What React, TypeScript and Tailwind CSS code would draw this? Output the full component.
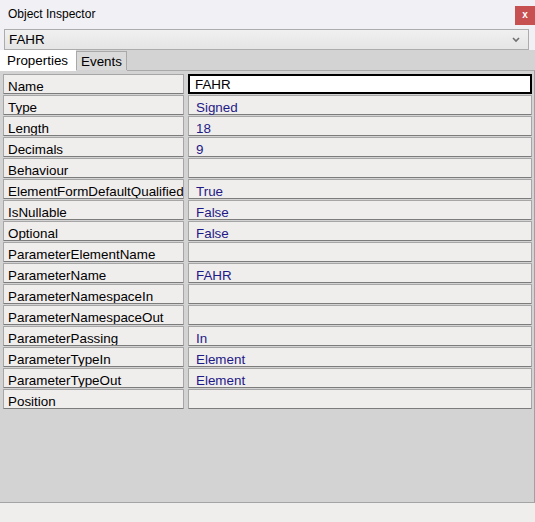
const rows: [string, string][] = [
  ['Name', 'FAHR'],
  ['Type', 'Signed'],
  ['Length', '18'],
  ['Decimals', '9'],
  ['Behaviour', ''],
  ['ElementFormDefaultQualified', 'True'],
  ['IsNullable', 'False'],
  ['Optional', 'False'],
  ['ParameterElementName', ''],
  ['ParameterName', 'FAHR'],
  ['ParameterNamespaceIn', ''],
  ['ParameterNamespaceOut', ''],
  ['ParameterPassing', 'In'],
  ['ParameterTypeIn', 'Element'],
  ['ParameterTypeOut', 'Element'],
  ['Position', ''],
];

export default function App() {
  return (
    <div
      className="w-[535px] h-[522px] flex flex-col bg-[#f1f0f5] overflow-hidden text-black"
      style={{ fontFamily: '"Liberation Sans", Arial, sans-serif' }}
    >
      {/* Title bar */}
      <div className="h-[29px] flex items-start justify-between shrink-0">
        <span className="text-[12px] pl-2 pt-[7px] leading-[14px]">Object Inspector</span>
        <div className="mt-[6px] w-[20px] h-[19px] bg-[#c75050] flex items-center justify-center text-white text-[10px] font-bold leading-none pb-[2px]">
          x
        </div>
      </div>

      {/* Object selector */}
      <div className="h-[21px] shrink-0 pl-1 pr-[6px]">
        <div className="h-[21px] border border-[#acacac] bg-gradient-to-b from-[#f0f0f0] to-[#e5e5e5] flex items-center justify-between pl-1 pr-2">
          <span className="text-[13.4px] leading-none">FAHR</span>
          <svg width="8" height="6" viewBox="0 0 8 6" className="mt-[1px]">
            <path d="M1 1 L4 4 L7 1" fill="none" stroke="#707070" strokeWidth="1.6" />
          </svg>
        </div>
      </div>

      {/* Tabs */}
      <div className="h-[21px] shrink-0 bg-[#d3d3d3] flex items-end">
        <div className="h-[21px] w-[76px] bg-white text-[13.4px] leading-none pl-[7px] pt-[4px]">Properties</div>
        <div className="h-[19px] w-[51px] mb-[1px] bg-[#dadada] border border-[#a9a9a9] border-b-0 text-[13.4px] leading-none pl-[4px] pt-[3px]">
          Events
        </div>
        <div className="flex-1 h-[1px] bg-[#a9a9a9]" />
      </div>

      {/* Property grid */}
      <div className="flex-1 bg-[#d3d3d3] border-r border-[#a0a0a0] pt-[3px] pl-[3px] pr-[2px]">
        <div className="flex flex-col gap-[1px]">
          {rows.map(([label, value], i) => (
            <div key={label} className="flex gap-[4px] h-[20px]">
              <div className="w-[181px] shrink-0 bg-[#f0eded] border border-[#a6a6a6] border-b-[#7c7c7c] rounded-[1px] text-[13.4px] leading-none pl-[4px] pt-[5px] whitespace-nowrap overflow-hidden">
                {label}
              </div>
              {i === 0 ? (
                <div className="flex-1 bg-white border-2 border-black text-[13.4px] leading-none pl-[5px] pt-[2px]">
                  {value}
                </div>
              ) : (
                <div className="flex-1 bg-[#f0eded] border border-[#a6a6a6] border-b-[#7c7c7c] rounded-[1px] text-[13.4px] leading-none pl-[7px] pt-[5px] text-[#1e1a86]">
                  {value}
                </div>
              )}
            </div>
          ))}
        </div>
      </div>

      {/* Status bar */}
      <div className="h-[20px] shrink-0 bg-[#f0eeed] border-t border-[#a4a4a4]" />
    </div>
  );
}
